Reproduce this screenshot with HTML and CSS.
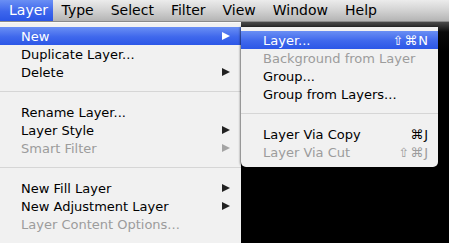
FILE: index.html
```html
<!DOCTYPE html>
<html>
  <head>
    <link rel="stylesheet" href="styles.css">
    <title>Layer menu</title>
  </head>
  <body>
    <div class="menubar">
      <span class="bar_item active">Layer</span>
      <span class="bar_item">Type</span>
      <span class="bar_item">Select</span>
      <span class="bar_item">Filter</span>
      <span class="bar_item">View</span>
      <span class="bar_item">Window</span>
      <span class="bar_item">Help</span>
    </div>

    <div class="desk">
      <div class="menu main_menu">
        <div class="row hot"><span>New</span><i class="arrow"></i></div>
        <div class="row"><span>Duplicate Layer...</span></div>
        <div class="row"><span>Delete</span><i class="arrow"></i></div>
        <div class="sep"></div>
        <div class="row"><span>Rename Layer...</span></div>
        <div class="row"><span>Layer Style</span><i class="arrow"></i></div>
        <div class="row off"><span>Smart Filter</span><i class="arrow"></i></div>
        <div class="sep"></div>
        <div class="row"><span>New Fill Layer</span><i class="arrow"></i></div>
        <div class="row"><span>New Adjustment Layer</span><i class="arrow"></i></div>
        <div class="row off"><span>Layer Content Options...</span></div>
      </div>

      <div class="canvas">
        <div class="menu sub_menu">
          <div class="row hot"><span>Layer...</span><span class="key">&#8679;&#8984;N</span></div>
          <div class="row off"><span>Background from Layer</span></div>
          <div class="row"><span>Group...</span></div>
          <div class="row"><span>Group from Layers...</span></div>
          <div class="sep"></div>
          <div class="row"><span>Layer Via Copy</span><span class="key">&#8984;J</span></div>
          <div class="row off"><span>Layer Via Cut</span><span class="key">&#8679;&#8984;J</span></div>
        </div>
      </div>
    </div>
  </body>
</html>
```

FILE: styles.css
```css
      html, body {
        margin: 0;
        height: 100%;
        background-color: #000000;
        font-family: "DejaVu Sans", "Liberation Sans", sans-serif;
        overflow: hidden;
      }

      .menubar {
        display: flex;
        height: 21px;
        background: linear-gradient(#ececec, #d2d2d2 50%, #b4b4b4);
        border-bottom: 1px solid #8a8a8a;
        font-size: 14px;
        line-height: 21px;
        color: #000000;
      }

      .bar_item {
        padding: 0 8.5px;
      }

      .bar_item.active {
        padding: 0 5px 0 9px;
        background: linear-gradient(#6a8ff4, #3d66ec 55%, #2a55e6);
        color: #ffffff;
      }

      .desk {
        display: flex;
        height: 221px;
      }

      .menu {
        background-color: #f1f1f1;
        font-size: 13px;
        color: #000000;
      }

      .main_menu {
        width: 241px;
        padding-top: 4px;
        border-top: 1px solid #fafafa;
      }

      .canvas {
        flex: 1;
        background: linear-gradient(#4a4a4a, #2a2a2a 5px, #0a0a0a 10px, #000000 30px);
        padding-top: 5px;
      }

      .sub_menu {
        width: 197px;
        padding: 4px 0 6px 0;
        border-radius: 0 0 5px 5px;
        box-shadow: -1px 0 2px rgba(0, 0, 0, 0.5);
      }

      .row {
        display: flex;
        align-items: center;
        justify-content: space-between;
        height: 18px;
        padding: 0 11px 0 21px;
        white-space: nowrap;
      }

      .sub_menu .row {
        padding: 0 9px 0 22px;
      }

      .row.hot {
        background: linear-gradient(#6a8ff4, #3f68ec 55%, #2c57e7);
        color: #ffffff;
      }

      .row.off {
        color: #9c9c9c;
      }

      .arrow {
        width: 0;
        height: 0;
        border-left: 8px solid #222222;
        border-top: 4.5px solid transparent;
        border-bottom: 4.5px solid transparent;
      }

      .row.hot .arrow {
        border-left-color: #ffffff;
      }

      .row.off .arrow {
        border-left-color: #a4a4a4;
      }

      .key {
        letter-spacing: 1px;
      }

      .sep {
        height: 22px;
        background: linear-gradient(transparent 10px, #d6d6d6 10px, #d6d6d6 11px, transparent 11px);
      }
```
